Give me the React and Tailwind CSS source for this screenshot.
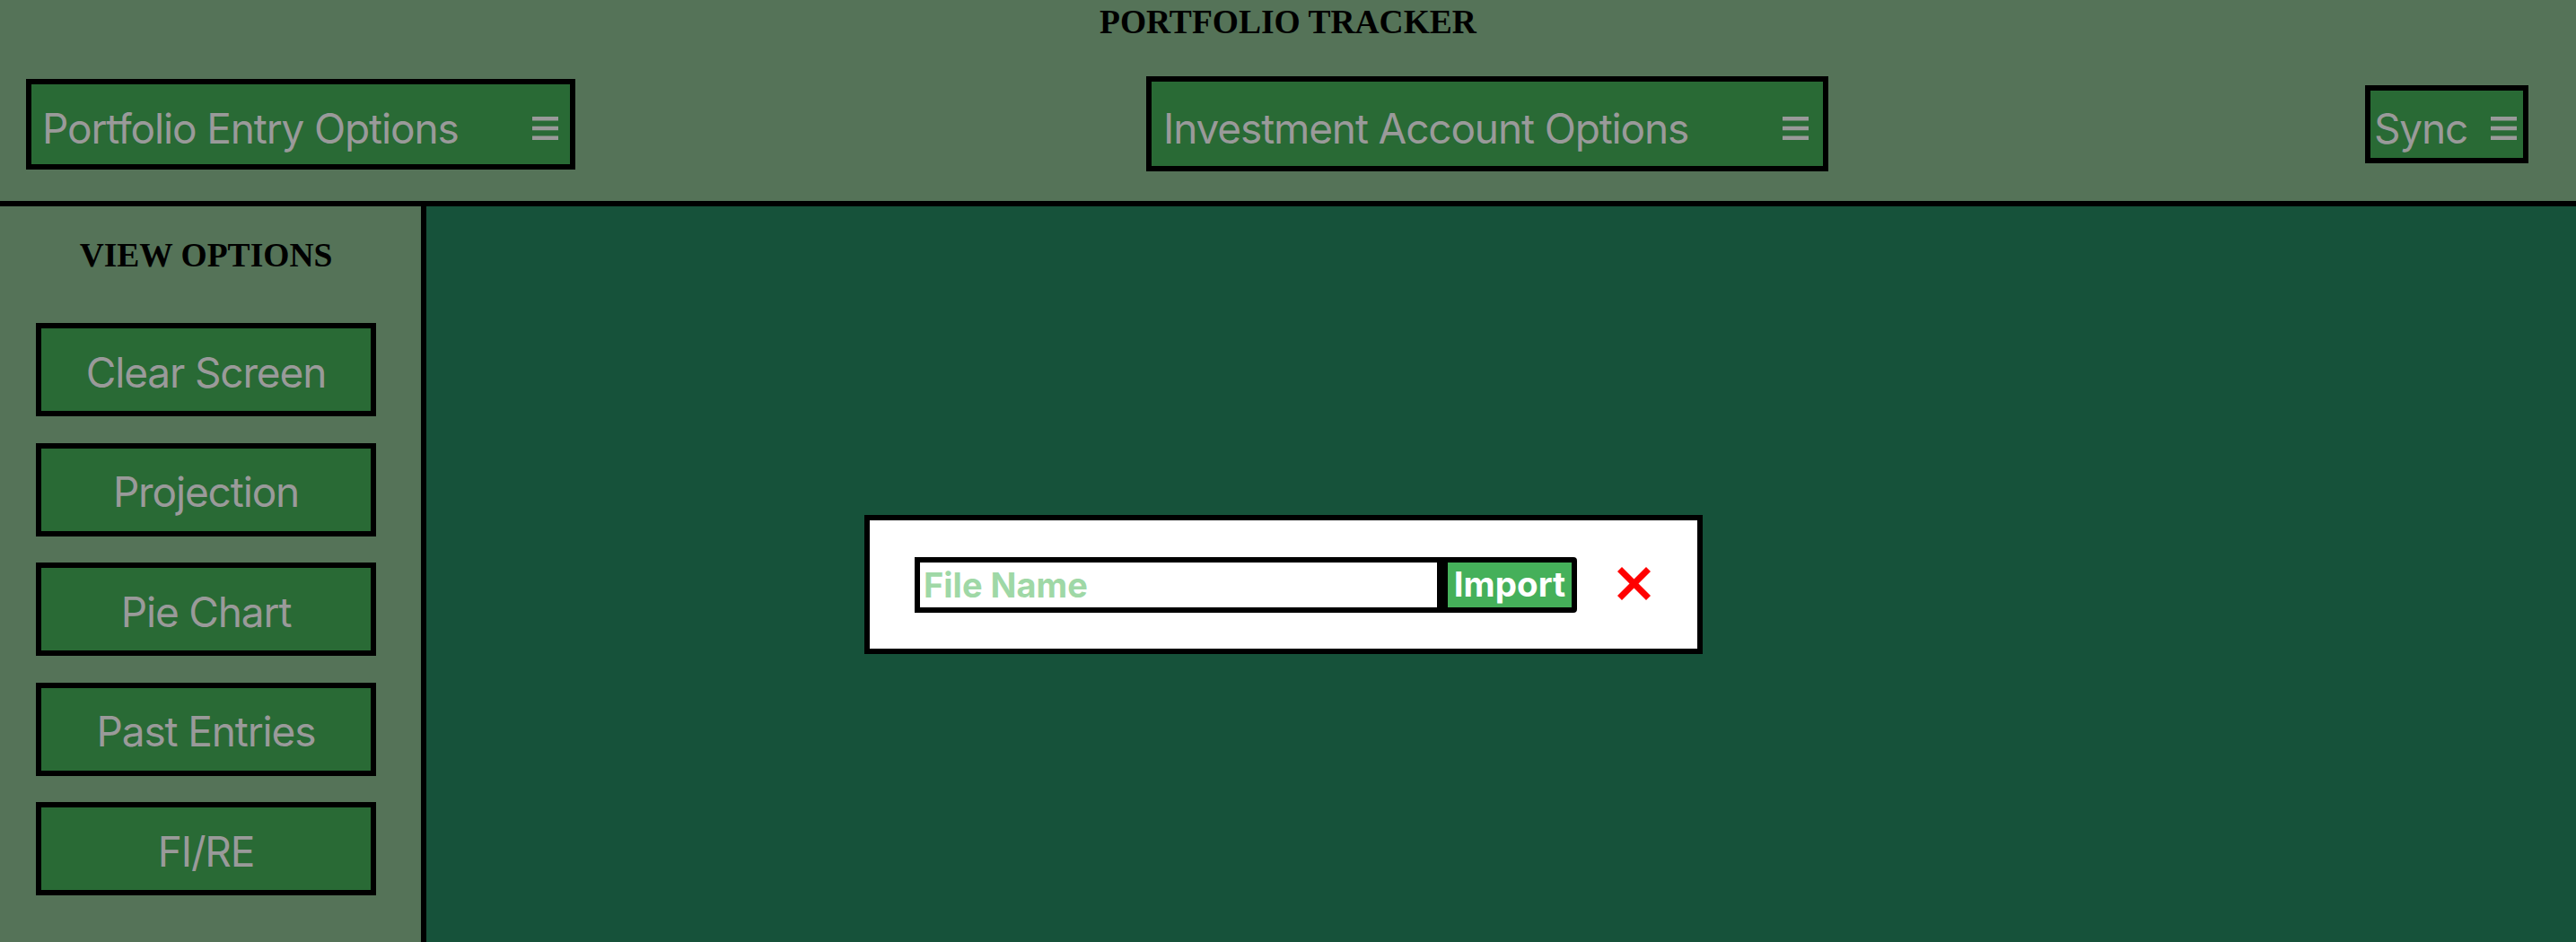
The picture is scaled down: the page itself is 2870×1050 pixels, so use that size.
import React from "react";

const sans = { fontFamily: "Inter, 'Liberation Sans', sans-serif" };

function Burger() {
  return (
    <svg width="29" height="26" viewBox="0 0 29 26" className="shrink-0">
      <rect x="0" y="0" width="29" height="4.5" fill="#9a9a9a" />
      <rect x="0" y="10.75" width="29" height="4.5" fill="#9a9a9a" />
      <rect x="0" y="21.5" width="29" height="4.5" fill="#9a9a9a" />
    </svg>
  );
}

function MenuBox({ label, className }) {
  return (
    <button
      className={`flex items-center justify-between pt-[9px] border-[6px] border-black bg-[#296a35] text-[#9a9a9a] text-[46px] leading-none tracking-[-0.025em] ${className}`}
      style={sans}
    >
      <span>{label}</span>
      <Burger />
    </button>
  );
}

const views = ["Clear Screen", "Projection", "Pie Chart", "Past Entries", "FI/RE"];

export default function App() {
  return (
    <div className="relative w-[2870px] h-[1050px] overflow-hidden flex flex-col bg-[#16523a]">
      {/* HEADER */}
      <header className="h-[230px] shrink-0 flex flex-col bg-[#557358] border-b-[6px] border-black">
        <h1
          className="h-[52px] pt-[6px] text-center text-[37.5px] leading-[37px] font-bold text-black"
          style={{ fontFamily: "'Liberation Serif', serif" }}
        >
          PORTFOLIO TRACKER
        </h1>
        <div className="flex-1 flex items-center pl-[29px]">
          <MenuBox label="Portfolio Entry Options" className="w-[612px] h-[101px] pl-[12px] pr-[13px]" />
          <MenuBox label="Investment Account Options" className="ml-[636px] w-[760px] h-[106px] pl-[13px] pr-[16px]" />
          <MenuBox label="Sync" className="ml-[598px] w-[182px] h-[87px] pl-[4px] pr-[7px]" />
        </div>
      </header>

      <div className="flex flex-1">
        {/* SIDEBAR */}
        <aside className="w-[475px] shrink-0 bg-[#557358] border-r-[6px] border-black pl-[40px] pt-[36px]">
          <h2
            className="w-[379px] text-center text-[37.5px] leading-[37px] font-bold text-black"
            style={{ fontFamily: "'Liberation Serif', serif" }}
          >
            VIEW OPTIONS
          </h2>
          <div className="mt-[57px] flex flex-col gap-[29.5px]">
            {views.map(v => (
              <button
                key={v}
                className="w-[379px] h-[104px] flex items-center justify-center pt-[5px] border-[6px] border-black bg-[#296a35] text-[#9a9a9a] text-[46px] leading-none tracking-[-0.025em]"
                style={sans}
              >
                {v}
              </button>
            ))}
          </div>
        </aside>

        <main className="flex-1" />
      </div>

      {/* IMPORT DIALOG */}
      <div className="absolute left-[963px] top-[574px] w-[934px] h-[155px] flex items-center pl-[50px] bg-white border-[6px] border-black">
        <input
          placeholder="File Name"
          className="w-[588px] h-[62px] pl-[4px] border-[6px] border-black bg-white text-[38px] font-bold outline-none placeholder:text-[#9fd8a6]"
          style={sans}
        />
        <button
          className="w-[150px] h-[62px] flex items-center justify-center border-[6px] border-black rounded-r-[4px] bg-[#45b05a] text-white text-[38.5px] font-bold leading-none"
          style={sans}
        >
          Import
        </button>
        <svg width="37" height="37" viewBox="0 0 37 37" className="ml-[45px] -mt-[3px]">
          <line x1="2.5" y1="2.5" x2="34.5" y2="34.5" stroke="#ff0000" strokeWidth="7" />
          <line x1="34.5" y1="2.5" x2="2.5" y2="34.5" stroke="#ff0000" strokeWidth="7" />
        </svg>
      </div>
    </div>
  );
}
